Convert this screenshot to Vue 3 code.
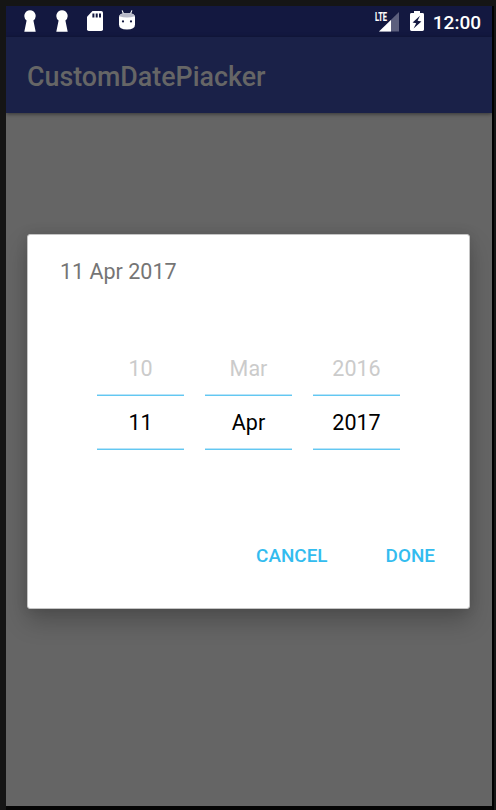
<script setup>
const columns = [
  { previous: '10', current: '11' },
  { previous: 'Mar', current: 'Apr' },
  { previous: '2016', current: '2017' },
]
</script>

<template>
  <div class="device">
    <div class="screen">
      <header class="status">
        <svg class="keyhole" width="12" height="22" viewBox="0 0 12 22">
          <path d="M6 .2a5.7 5.7 0 0 0-3.4 10.2L.3 21.8h11.4L9.4 10.4A5.7 5.7 0 0 0 6 .2z" />
        </svg>
        <svg class="keyhole second" width="12" height="22" viewBox="0 0 12 22">
          <path d="M6 .2a5.7 5.7 0 0 0-3.4 10.2L.3 21.8h11.4L9.4 10.4A5.7 5.7 0 0 0 6 .2z" />
        </svg>
        <svg class="card" width="16" height="20" viewBox="0 0 16 20">
          <path d="M5.5 0H14.2Q16 0 16 1.8V18.2Q16 20 14.2 20H1.8Q0 20 0 18.2V5.8z" />
          <path class="slot" d="M5.4 2.4h2v4h-2zM8.7 2.4h2v4h-2zM12 2.4h2v4h-2z" />
        </svg>
        <svg class="robot" width="16" height="20" viewBox="0 0 16 20">
          <path class="antenna" d="M3.1.4l1.4 3.4M12.9.4l-1.4 3.4" />
          <path d="M0 7Q0 3 8 3t8 4v7.5Q16 19.5 8 19.5T0 14.5z" />
          <path class="brow" d="M.4 6.2Q1.5 3 8 3t7.6 3.2Q12 7.6 8 7.6T.4 6.2z" />
          <circle class="eye" cx="4" cy="11.4" r="1.1" />
          <circle class="eye" cx="12" cy="11.4" r="1.1" />
        </svg>
        <span class="spacer"></span>
        <div class="signal">
          <svg width="20" height="20" viewBox="0 0 20 20">
            <path class="weak" d="M20 0v19.5H0z" />
            <path d="M12 8v11.5H0z" />
          </svg>
          <span class="lte">LTE</span>
        </div>
        <svg class="battery" width="14" height="20" viewBox="0 0 14 20">
          <path d="M4 0h6v2h2.5Q14 2 14 3.4v15.2Q14 20 12.5 20h-11Q0 20 0 18.6V3.4Q0 2 1.5 2H4z" />
          <path class="bolt" d="M10 4.8L2.6 11.4l3.6.8-2.6 5.2 7.8-6.8-3.8-.9z" />
        </svg>
        <span class="clock">12:00</span>
      </header>
      <div class="appbar"><h1>CustomDatePiacker</h1></div>
      <main>
        <section class="dialog">
          <h2>11 Apr 2017</h2>
          <div class="picker">
            <div v-for="column in columns" :key="column.current" class="column">
              <div class="previous">{{ column.previous }}</div>
              <div class="current">{{ column.current }}</div>
            </div>
          </div>
          <footer>
            <button>CANCEL</button>
            <button>DONE</button>
          </footer>
        </section>
      </main>
    </div>
  </div>
</template>

<style>
body { margin: 0; background: #151515; }
</style>

<style scoped>
.device {
  box-sizing: border-box;
  width: 496px;
  height: 810px;
  padding: 6px 4px 4px 6px;
  overflow: hidden;
  background: linear-gradient(#000, #000) 492px 6px / 2px 804px no-repeat,
    linear-gradient(#050505, #050505) 6px 806px / 488px 4px no-repeat, #151515;
  font-family: Roboto, sans-serif;
}
.screen {
  display: flex;
  flex-direction: column;
  height: 800px;
  background: #656565;
  overflow: hidden;
}
.status {
  display: flex;
  box-sizing: border-box;
  height: 31px;
  padding: 0 11px 0 18px;
  background: #131840;
  color: #fff;
}
.status svg { display: block; flex: none; fill: #fff; }
.keyhole { margin-top: 4px; }
.second { margin-left: 20px; }
.card { margin: 5px 0 0 19px; }
.robot { margin: 4px 0 0 16px; }
.status .slot, .status .eye, .status .bolt { fill: #131840; }
.antenna { stroke: #fff; stroke-width: 1.1; }
.status .brow { fill: #b8bac8; }
.spacer { flex: 1; }
.signal { position: relative; width: 20px; margin: 6px 11px 0 0; }
.status .weak { fill: #5c5f7d; }
.lte {
  position: absolute;
  left: -4px;
  top: -1px;
  font-size: 12px;
  line-height: 12px;
  font-weight: 700;
  -webkit-text-stroke: 0.15px #fff;
  transform: scaleX(0.62);
  transform-origin: left;
}
.battery { margin: 5px 9px 0 0; }
.clock { font-size: 19px; font-weight: 500; line-height: 33px; }
.appbar {
  position: relative;
  height: 76px;
  flex: none;
  background: #1a2148;
  box-shadow: 0 1px 4px rgba(0, 0, 0, 0.5);
}
h1 {
  margin: 0;
  padding-left: 21px;
  font-size: 26.8px;
  font-weight: 500;
  line-height: 80px;
  color: #666;
}
main { padding: 121px 22px 0 21px; }
.dialog {
  display: flex;
  flex-direction: column;
  box-sizing: border-box;
  height: 375px;
  border: 1px solid #c4c4c4;
  border-radius: 3px;
  background: #fff;
  box-shadow: 0 12px 24px rgba(0, 0, 0, 0.23), 0 0 12px rgba(0, 0, 0, 0.1);
}
h2 {
  margin: 22px 0 0 32px;
  font-size: 21.5px;
  font-weight: 400;
  line-height: 30px;
  color: #757575;
}
.picker {
  display: flex;
  justify-content: center;
  gap: 21.5px;
  margin: 53px 0 0;
  font-size: 21.5px;
  text-align: center;
}
.column { width: 86.5px; }
.previous { height: 54px; line-height: 57px; color: #cbcbcb; }
.current {
  box-sizing: border-box;
  height: 56px;
  line-height: 55.5px;
  border-top: 1px solid #b9e4f8;
  border-bottom: 1px solid #62c8f2;
  box-shadow: inset 0 1px #62c8f2, inset 0 -1px #b9e4f8;
  color: #000;
}
footer {
  display: flex;
  justify-content: flex-end;
  gap: 58px;
  margin: 87px 34px 0 0;
}
button {
  padding: 0;
  border: 0;
  background: none;
  font: 500 18.9px/37px Roboto, sans-serif;
  color: #33bcef;
}
</style>
